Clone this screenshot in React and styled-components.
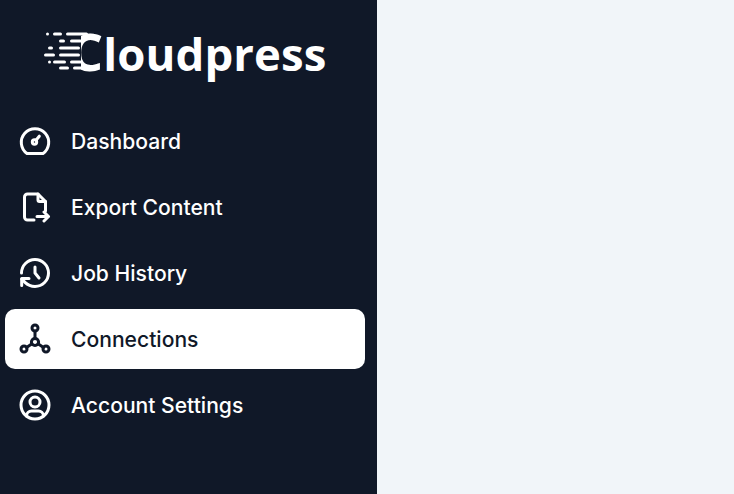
import React from "react";
import styled, { createGlobalStyle } from "styled-components";

const GlobalStyle = createGlobalStyle`
  html, body {
    margin: 0;
    height: 100%;
    overflow: hidden;
  }
  #root {
    height: 100%;
  }
`;

const Page = styled.div`
  display: flex;
  height: 494px;
  background: #f1f5f9;
`;

const Sidebar = styled.aside`
  width: 377px;
  height: 100%;
  background: #101828;
  padding: 25px 12px 0 5px;
  box-sizing: border-box;
`;

const Logo = styled.div`
  display: flex;
  align-items: center;
  height: 54px;
  margin: 0 0 32px 39px;
`;

const LogoMark = styled.svg`
  position: relative;
  z-index: 1;
  width: 54px;
  height: 42px;
  flex: none;
  margin-right: -28px;
`;

const LogoText = styled.span`
  font-family: "Open Sans", sans-serif;
  font-weight: 700;
  font-size: 45.5px;
  letter-spacing: 0.1px;
  line-height: 54px;
  color: #ffffff;
`;

const LogoCap = styled.span`
  font-size: 52px;
`;

const Nav = styled.nav`
  display: flex;
  flex-direction: column;
  gap: 6px;
`;

const Item = styled.a`
  display: flex;
  align-items: center;
  gap: 20px;
  height: 60px;
  padding-left: 14px;
  border-radius: 10px;
  font-family: Inter, sans-serif;
  font-weight: 500;
  font-size: 21.1px;
  color: ${(p) => (p.$active ? "#101828" : "#ffffff")};
  background: ${(p) => (p.$active ? "#ffffff" : "transparent")};
`;

const Icon = styled.svg`
  width: 32px;
  height: 32px;
  flex: none;
  fill: none;
  stroke: currentColor;
  stroke-width: 3;
  stroke-linecap: round;
  stroke-linejoin: round;
`;

const DashboardIcon = () => (
  <Icon viewBox="0 0 32 32">
    <path d="M8 28.5a13.7 13.7 0 1 1 16 0z" />
    <circle cx="15.5" cy="17" r="2.2" />
    <path d="M17 15.2l3.3-4" />
  </Icon>
);

const ExportIcon = () => (
  <Icon viewBox="0 0 32 32">
    <path d="M19 3v6a1.5 1.5 0 0 0 1.5 1.5h6" />
    <path d="M15 29H8.5a3 3 0 0 1-3-3V6a3 3 0 0 1 3-3H19l7.5 7.5V20" />
    <path d="M18 25.5h11.5M25 21l4.5 4.5L25 30" />
  </Icon>
);

const HistoryIcon = () => (
  <Icon viewBox="0 0 32 32">
    <path d="M16 10v6l4 5" />
    <path d="M2.5 16A13.5 13.5 0 1 1 16 29.5a14.5 14.5 0 0 1-10-4.1L2.7 22" />
    <path d="M2.7 28.5V21.5H10" />
  </Icon>
);

const ConnectionsIcon = () => (
  <Icon viewBox="0 0 32 32">
    <circle cx="16" cy="19" r="3.6" />
    <circle cx="16" cy="5" r="3" />
    <circle cx="5" cy="26" r="3" />
    <circle cx="27" cy="26" r="3" />
    <path d="M16 8v7.5M7.5 24.4l5.5-3.6M24.5 24.4l-5.5-3.6" />
  </Icon>
);

const AccountIcon = () => (
  <Icon viewBox="0 0 32 32">
    <circle cx="16" cy="16" r="14" />
    <circle cx="16" cy="13" r="5" />
    <path d="M7.5 27v-.5a5 5 0 0 1 5-4.5h7a5 5 0 0 1 5 4.5v.5" />
  </Icon>
);

const navItems = [
  { label: "Dashboard", icon: DashboardIcon },
  { label: "Export Content", icon: ExportIcon },
  { label: "Job History", icon: HistoryIcon },
  { label: "Connections", icon: ConnectionsIcon, active: true },
  { label: "Account Settings", icon: AccountIcon },
];

// speed lines that run into the C, x / y / width in mark pixels
const stripes = [
  [2, 1.5, 3], [9, 1.5, 9], [22, 1.5, 22],
  [15, 8.5, 6], [26, 8.5, 12],
  [4, 15.5, 5], [15, 15.5, 21],
  [0, 22.5, 11], [15, 22.5, 21],
  [4, 29.5, 3], [9, 29.5, 13], [26, 29.5, 12],
  [15, 35.5, 10], [29, 35.5, 16],
];

const App = () => (
  <Page>
    <GlobalStyle />
    <Sidebar>
      <Logo>
        <LogoMark viewBox="0 0 54 42">
          <rect x="22" y="0" width="15" height="42" fill="#101828" />
          {stripes.map(([x, y, w]) => (
            <rect key={`${x}-${y}`} x={x} y={y} width={w} height="3" rx="1.5" fill="#ffffff" />
          ))}
        </LogoMark>
        <LogoText>
          <LogoCap>C</LogoCap>loudpress
        </LogoText>
      </Logo>
      <Nav>
        {navItems.map((item) => (
          <Item key={item.label} $active={item.active}>
            <item.icon />
            {item.label}
          </Item>
        ))}
      </Nav>
    </Sidebar>
  </Page>
);

export default App;
